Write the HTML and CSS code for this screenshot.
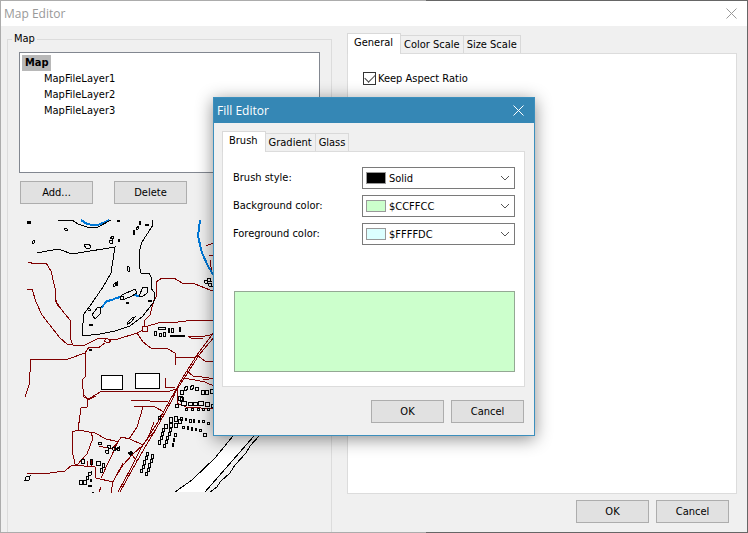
FILE: index.html
```html
<!DOCTYPE html>
<html lang="en">
<head>
<meta charset="utf-8">
<meta name="viewport" content="width=device-width, initial-scale=1">
<title>Map Editor</title>
<link rel="stylesheet" href="styles.css">
</head>
<body>
<main class="window">
  <header class="titlebar">
    <h1 class="title">Map Editor</h1>
    <button class="close" type="button" aria-label="Close Map Editor"><svg width="11" height="11" viewBox="0 0 11 11"><path d="M.5.5l10 10M10.5.5l-10 10"/></svg></button>
  </header>
  <div class="workspace">
    <fieldset class="group">
      <legend>Map</legend>
      <ul class="tree">
        <li><span class="root">Map</span>
          <ul class="layers">
            <li>MapFileLayer1</li>
            <li>MapFileLayer2</li>
            <li>MapFileLayer3</li>
          </ul>
        </li>
      </ul>
      <div class="actions">
        <button class="button" type="button">Add...</button>
        <button class="button" type="button">Delete</button>
      </div>
      <svg class="map" viewBox="24 219 296 275" role="img" aria-label="Map preview">
        <path class="field" d="M175 492L192 480L215 458L233 436L254 436L205 492z"/>
        <g class="road">
          <path d="M28 262L35 264L46 263L51 271L55 288L55 300L61 309"/>
          <path d="M56 300V303L70 320V338L73 345L83 346L99 338L108 339L115 340L137 333L143 330"/>
          <circle cx="145" cy="329" r="3"/>
          <path d="M148 326L158 323L178 322L195 320H215"/>
          <path d="M144 326L145 320L150 315L154 300L156 297V282L162 278H174L182 283L195 284L210 290H215"/>
          <path d="M27 289H32L36 302L42 315L60 338L67 344L72 345"/>
          <path d="M25 397L29 385L31 359H68L85 353L89 347L98 348L105 343"/>
          <path d="M104 341L107 338L111 341L108 343z"/>
          <path d="M85 353V377L82 380L84 397L89 399L95 395L102 391H150L168 392L175 389"/>
          <path d="M84 395L88 400L96 396M88 400L87 407L81 408L78 430"/>
          <path d="M72 432L78 430L95 433L106 439L115 441L118 442L121 437L130 439L143 445"/>
          <path d="M72 432V450L75 464L77 465L87 454L93 438L91 433"/>
          <path d="M27 474L50 473L65 471L72 465L95 467L96 478L113 482L123 463M113 482L111 493M101 478L118 442M99 492L101 487"/>
          <path d="M99 446L112 449L118 442M87 461V466M91 460V466"/>
          <path d="M118 492L130 470L141 448L158 422L170 400L173 395L183 377L197 355L215 331"/>
          <path d="M120 492L132 470L144 449L160 422L172 400L176 391L185 377L199 355L215 336"/>
          <path d="M131 400L150 401H168M134 406L155 407L164 412M143 407L137 427L129 439"/>
          <path d="M155 432L148 438L143 445L132 455L123 465L115 478M132 455L137 461M148 438L154 422"/>
          <path d="M137 333L143 342L151 348L168 349L175 353V365M175 357H195"/>
          <path d="M197 355L205 361L215 362M187 371L193 376L202 377L215 379M182 378L195 380L205 382L209 384L215 386"/>
          <path d="M165 378V387H175M188 336H205L215 334M188 336L191 338H203"/>
          <path d="M177 388V403L186 407L215 409M203 380L209 379M206 246L213 243M209 255H213M210 260L212 273"/>
        </g>
        <g class="water">
          <path d="M81 220L87 224L93 225L98 225L105 222L109 220"/>
          <path d="M200 220L199 228L198 236L202 253L208 266L214 276"/>
          <path d="M101 308L107 301L112 300L116 298L121 297M134 295L139 296"/>
        </g>
        <g class="line">
          <path d="M58 220H72L78 224L87 227H98L111 220"/>
          <path d="M37 253L58 249L72 254L115 247L111 273L103 287L92 303L84 314L82 332L83 336L100 334L115 331L130 326L142 317L153 303L155 299L154 292L151 288V277L149 273H141L139 265V252L142 242L153 225L152 220"/>
          <path d="M120 298L122 295L135 289L137 293L130 297L122 300zM139 296L143 287L148 287L147 293L142 297zM92 315L97 308L101 307L100 314L95 319z"/>
          <circle cx="122" cy="298" r="2"/>
          <path d="M175 492L192 480L215 458L233 436M254 436L205 492M259 436L250 446L246 453L235 465L230 473L220 482L217 487L210 492"/>
        </g>
        <g class="house block">
          <path d="M101 375h21v14h-21zM135 373h24v15h-24z"/>
        </g>
        <g class="house">
          <path d="M64 229l2-1 2 2-2 1zM32 242l2-2 1 2-2 2zM84 245l4-1 3 2-1 2h-4zM110 238l3-2 1 2-3 1zM109 241l3-1v3h-2zM117 220h2v1h-2zM113 285l3-3 1 2-3 3z"/>
          <path d="M139 224l1-3 1 1-1 3zM136 229l2-3 1 2-2 2zM133 234l1-4 1 2-1 3zM127 270l1-4 2 2-1 4zM115 284l2-2v3h-2zM204 281l3-1 1 3-3 0zM207 279l3-1 1 3-3 0zM208 284l3-1 1 3-3 0z"/>
          <path d="M87 309l2-1 2 2-2 1zM127 323l5-5 3-1-4 5-4 3zM158 327h7v2h-7zM154 331h2v4h-2zM159 333h2v3h-2zM163 332h2v4h-2zM168 328h1v4h-1zM171 328h2v4h-2zM179 327h1v4h-1zM170 335h14v1h-14z"/>
          <path d="M184 388l3-2 1 3-3 2zM190 387l3-2 1 3-3 2zM195 387h3v3h-3zM201 390h3v4h-3zM205 390h3v4h-3zM210 389h3v4h-3zM180 390h3v4h-3zM180 397h3v4h-3z"/>
          <path d="M81 459h3v4h-3zM90 459h2v5h-2zM96 461h4v4h-4zM102 463h2v4h-2zM100 468h2v4h-2zM88 473l3-1v3l-2 1zM86 476h2v3h-2zM79 480h3v4h-3zM83 480h3v4h-3zM90 479h1v2h-1zM92 492h2M26 477l4-1-1 4h-4z"/>
          <path d="M98 443l3-1 1 2-3 1zM105 451l3-1v3h-2zM107 446l3-1 1 3-2 1zM112 448l3-1v3h-2zM116 449l3-2v3h-2zM158 417l2-1v3h-2zM117 449l2-1v2h-2z"/>
          <path d="M169 417h3v5h-3zM174 416h3v5h-3zM178 419h3v4h-3zM180 417h2v3h-2zM185 418h1v2h-1zM189 419h2v3h-2zM193 419h1v3h-1zM198 420h1v2h-1zM202 420h2v2h-2zM207 422h2v2h-2z"/>
          <path d="M164 424h3v4h-3zM169 423h3v4h-3zM174 423h3v4h-3zM182 426h2v2h-2zM187 426h1v3h-1zM191 427h1v3h-1zM195 428h1v2h-1zM199 429h2v2h-2zM203 433h3v3h-3z"/>
          <path d="M162 428h2v3h-2zM161 432h2v3h-2zM160 436h2v3h-2zM158 440h2v4h-2zM169 428h2v3h-2zM168 432h2v3h-2zM166 436h2v3h-2zM165 440h2v3h-2zM163 444h2v3h-2zM174 433h2v3h-2zM173 438h1v3h-1zM172 443h1v3h-1z"/>
          <path d="M146 452h2v3h-2zM145 456h2v3h-2zM143 460h2v4h-2zM142 465h2v3h-2zM140 469h2v3h-2zM151 454h2v4h-2zM150 459h2v3h-2zM148 463h2v4h-2zM147 468h2v3h-2zM145 472h2v3h-2z"/>
          <path d="M178 396h4v4h-4zM181 401h5v4h-5zM188 402h4v3h-4zM193 402h4v3h-4zM198 401h5v4h-5zM205 402h4v4h-4zM211 404h3v3h-3zM185 408h2v2h-2zM191 408h2v2h-2zM197 408h2v2h-2zM202 408h2v2h-2zM207 408h2v2h-2z"/>
          <circle cx="177" cy="406" r="2"/>
        </g>
        <path class="solid" d="M27 221h4v3h-4zM118 239h2v3h-2zM145 224h4v2h-4zM126 302h3v2h-3zM148 300h4v2h-4zM89 324h4v2h-4zM89 349h3v2h-3zM88 485h4v2h-4zM127 453l4-2 3 2-4 3z"/>
      </svg>
    </fieldset>
    <div class="side">
      <div class="tabs" role="tablist">
        <button class="tab active" type="button" role="tab" aria-selected="true">General</button>
        <button class="tab" type="button" role="tab" aria-selected="false">Color Scale</button>
        <button class="tab" type="button" role="tab" aria-selected="false">Size Scale</button>
      </div>
      <section class="panel general">
        <label class="check"><input type="checkbox" checked><span>Keep Aspect Ratio</span></label>
      </section>
      <footer class="footer">
        <button class="button" type="button">OK</button>
        <button class="button" type="button">Cancel</button>
      </footer>
    </div>
  </div>
</main>

<div class="overlay">
  <section class="dialog" role="dialog" aria-labelledby="fill-title">
    <header class="titlebar">
      <h2 class="title" id="fill-title">Fill Editor</h2>
      <button class="close" type="button" aria-label="Close Fill Editor"><svg width="11" height="11" viewBox="0 0 11 11"><path d="M.5.5l10 10M10.5.5l-10 10"/></svg></button>
    </header>
    <div class="dialog-body">
      <div class="tabs" role="tablist">
        <button class="tab active" type="button" role="tab" aria-selected="true">Brush</button>
        <button class="tab" type="button" role="tab" aria-selected="false">Gradient</button>
        <button class="tab" type="button" role="tab" aria-selected="false">Glass</button>
      </div>
      <div class="panel brush">
        <div class="row">
          <label for="style">Brush style:</label>
          <div class="combo"><span class="swatch black"></span><select id="style"><option>Solid</option></select><svg class="chevron" width="10" height="6" viewBox="0 0 10 6"><path d="M1 1l4 4 4-4"/></svg></div>
        </div>
        <div class="row">
          <label for="back">Background color:</label>
          <div class="combo"><span class="swatch green"></span><select id="back"><option>$CCFFCC</option></select><svg class="chevron" width="10" height="6" viewBox="0 0 10 6"><path d="M1 1l4 4 4-4"/></svg></div>
        </div>
        <div class="row">
          <label for="fore">Foreground color:</label>
          <div class="combo"><span class="swatch cyan"></span><select id="fore"><option>$FFFFDC</option></select><svg class="chevron" width="10" height="6" viewBox="0 0 10 6"><path d="M1 1l4 4 4-4"/></svg></div>
        </div>
        <div class="preview"></div>
      </div>
      <footer class="footer">
        <button class="button" type="button">OK</button>
        <button class="button" type="button">Cancel</button>
      </footer>
    </div>
  </section>
</div>
</body>
</html>
```
FILE: styles.css
```css
* {
  box-sizing: border-box;
}

body {
  margin: 0;
  min-height: 100vh;
  display: flex;
  padding: 1px;
  background: linear-gradient(90deg, #acacac 57%, #666 57%);
  color: #000;
  font: 11px/16px "DejaVu Sans Condensed", "Noto Sans", sans-serif;
}

button,
select {
  font: inherit;
  color: inherit;
}

ul {
  list-style: none;
  margin: 0;
  padding: 0;
}

.window {
  flex: 1;
  display: flex;
  flex-direction: column;
  background: #f0f0f0;
}

.titlebar {
  display: flex;
  align-items: center;
  justify-content: space-between;
  height: 25px;
  padding: 0 10px 0 3px;
  background: #fff;
  color: #999;
}

.title {
  margin: 0;
  font: 12px/16px "Open Sans", "Noto Sans", sans-serif;
}

.close {
  display: flex;
  padding: 0;
  border: 0;
  background: none;
  color: inherit;
}

.close path {
  fill: none;
  stroke: currentColor;
}

.workspace {
  flex: 1;
  display: flex;
  gap: 15px;
  padding: 5px 10px 0 6px;
}

.group {
  flex: 0 0 325px;
  min-width: 0;
  margin: 0;
  padding: 5px 11px 0;
  border: 1px solid #dcdcdc;
  border-bottom: 0;
}

.group legend {
  margin-left: -7px;
  padding: 0 2px;
}

.tree {
  height: 121px;
  padding: 2px;
  border: 1px solid #828790;
  background: #fff;
}

.root {
  display: inline-block;
  padding: 0 2px 0 3px;
  background: #b8b8b8;
  font-weight: bold;
}

.layers {
  padding-left: 22px;
}

.actions {
  display: flex;
  gap: 21px;
  padding: 8px 1px 0;
}

.button {
  width: 73px;
  height: 23px;
  padding: 0;
  border: 1px solid #adadad;
  background: #e1e1e1;
}

.map {
  display: block;
  width: 296px;
  margin: 15px 0 0 5px;
  fill: none;
  shape-rendering: crispEdges;
}

.field {
  fill: #fff;
}

.road {
  stroke: #800000;
}

.water {
  stroke: #0078d7;
  stroke-width: 2;
}

.line,
.house {
  stroke: #000;
}

.block {
  fill: #fff;
}

.solid {
  fill: #000;
}

.side {
  flex: 1;
  display: flex;
  flex-direction: column;
  padding-top: 2px;
}

.tabs {
  display: flex;
  align-items: flex-end;
  height: 20px;
}

.tab {
  height: 18px;
  padding: 1px 3px 0;
  border: 1px solid #d9d9d9;
  border-left: 0;
  border-bottom: 0;
  background: #f0f0f0;
}

.tab.active {
  position: relative;
  height: 21px;
  margin-bottom: -1px;
  padding: 0 7px 2px 6px;
  border-left: 1px solid #d9d9d9;
  background: #fff;
}

.panel {
  border: 1px solid #dcdcdc;
  background: #fff;
}

.general {
  flex: 1;
  padding: 15px;
}

.check {
  display: inline-flex;
  align-items: center;
  gap: 2px;
}

.check input {
  appearance: none;
  width: 13px;
  height: 13px;
  margin: 0;
  border: 1px solid #333;
  background: #fff;
  display: grid;
  place-items: center;
}

.check input:checked::before {
  content: "";
  width: 9px;
  height: 5px;
  margin-bottom: 3px;
  border: solid #444;
  border-width: 0 0 1px 1px;
  transform: rotate(-45deg);
}

.footer {
  display: flex;
  justify-content: flex-end;
  gap: 7px;
  padding: 6px 8px 9px;
}

.overlay {
  position: absolute;
  inset: 0;
  display: grid;
  place-items: center;
}

.dialog {
  width: 322px;
  border: 1px solid #3c8fbd;
  background: #f0f0f0;
  box-shadow: 0 3px 16px rgba(0, 0, 0, 0.45);
}

.dialog .titlebar {
  background: #3587b5;
  color: #fff;
}

.dialog-body {
  padding: 8px 9px 3px 8px;
}

.brush {
  padding: 15px 9px 14px 10px;
}

.row {
  display: grid;
  grid-template-columns: 129px 1fr;
  align-items: center;
  margin-bottom: 6px;
}

.combo {
  display: grid;
  grid-template-columns: 26px 1fr 14px;
  align-items: center;
  height: 22px;
  border: 1px solid #7a7a7a;
  background: #fff;
}

.combo select {
  grid-area: 1 / 1 / 2 / 4;
  height: 20px;
  padding: 1px 0 0 26px;
  border: 0;
  background: transparent;
  appearance: none;
}

.swatch {
  grid-area: 1 / 1;
  width: 20px;
  height: 12px;
  margin-left: 3px;
  border: 1px solid #999;
}

.black {
  background: #000;
}

.green {
  background: #cfc;
}

.cyan {
  background: #dcffff;
}

.chevron {
  grid-area: 1 / 3;
  pointer-events: none;
  fill: none;
  stroke: #555;
}

.preview {
  height: 81px;
  margin: 46px 0 0 1px;
  border: 1px solid #94a894;
  background: #cfc;
}

.dialog .footer {
  padding: 13px 1px 9px;
}
```
